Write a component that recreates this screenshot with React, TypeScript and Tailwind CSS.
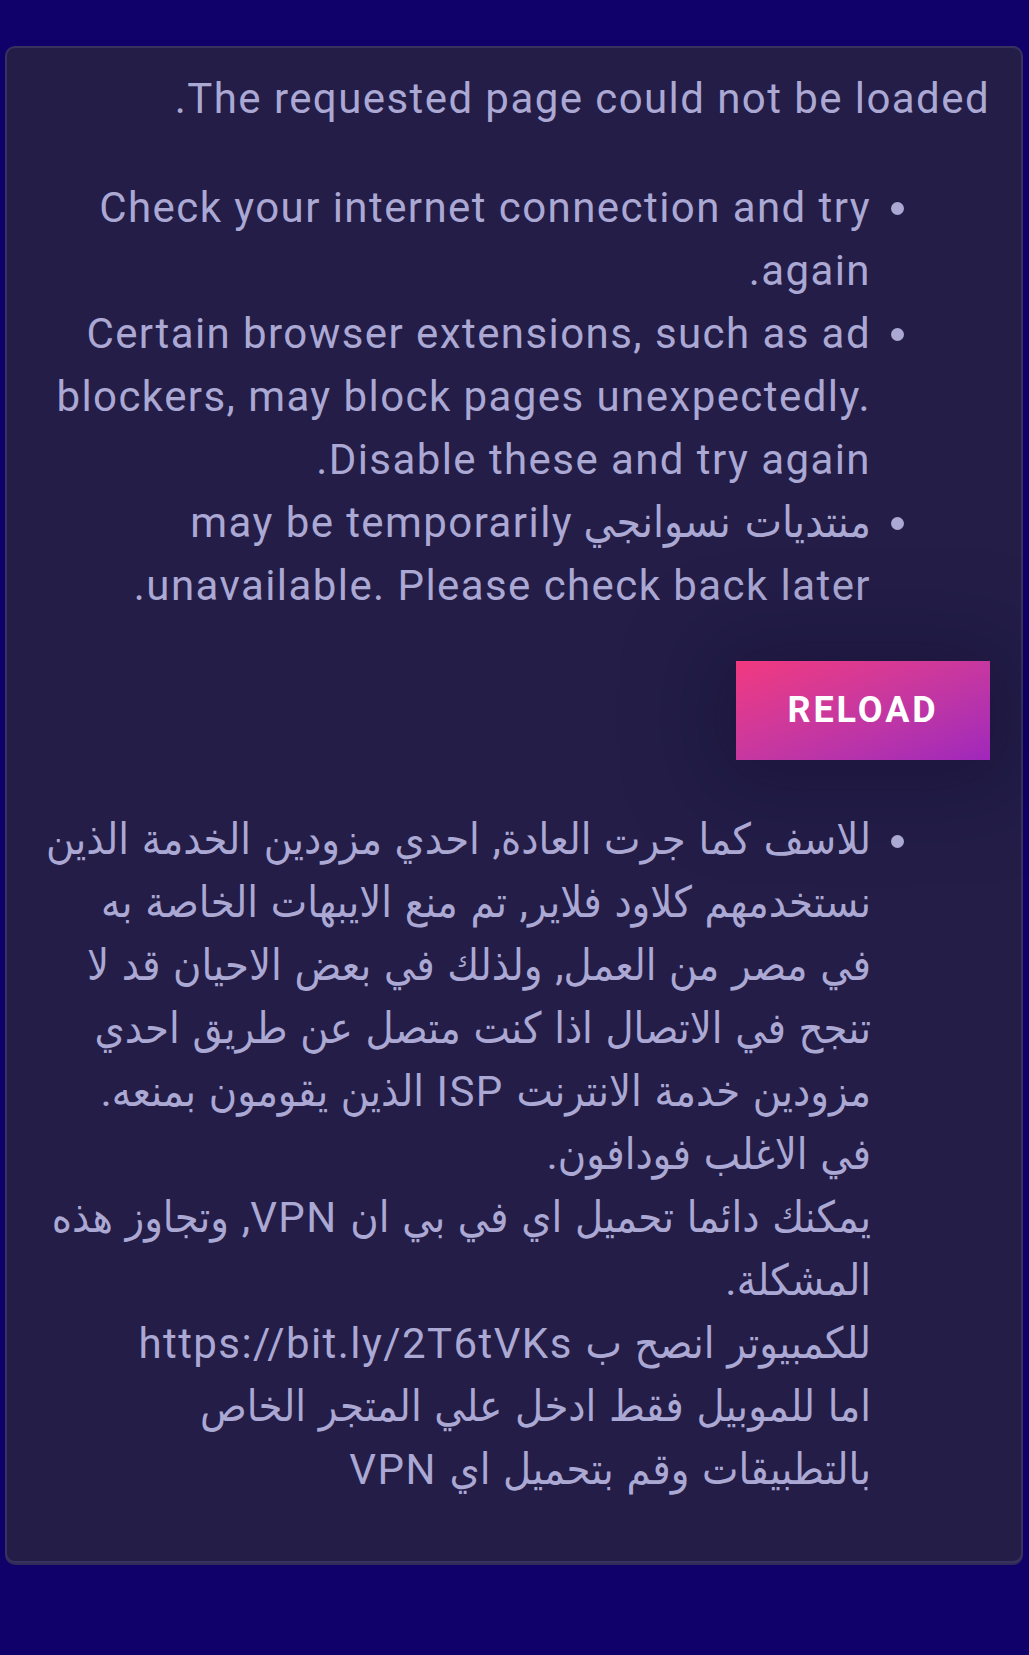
const font = "font-['Roboto','DejaVu_Sans_Condensed','DejaVu_Sans',sans-serif]";

// latin runs are a touch wider in the shot than desktop Roboto
const L = ({ children }: { children: React.ReactNode }) => (
  <span className="text-[42px] tracking-[0.034em] [word-spacing:0]">{children}</span>
);

const App = () => {
  return (
    <div className={`min-h-screen bg-[#10006a] pt-[46px] pl-[5px] pr-[6px] pb-[93px] ${font}`}>
      <section
        dir="rtl"
        className="rounded-[10px] border-2 border-[#38325f] bg-[#231d48] px-[31px] pt-[19px] pb-[60px] text-[42px] leading-[63px] text-[#aba8d4] shadow-[0_2px_0_#2f2a58]"
      >
        <p>
          <L>The requested page could not be loaded.</L>
        </p>

        <ul className="mt-[46px] list-disc ps-[119px]">
          <li>
            <L>Check your internet connection and try again.</L>
          </li>
          <li>
            <L>
              Certain browser extensions, such as ad blockers, may block pages
              unexpectedly. Disable these and try again.
            </L>
          </li>
          <li>
            <span className="text-[44px] [word-spacing:3px]">منتديات نسوانجي</span>{" "}
            <L>may be temporarily unavailable. Please check back later.</L>
          </li>
        </ul>

        <div className="mt-[44px] flex">
          <button className="-me-[2px] h-[99px] w-[254px] bg-linear-to-br from-[#f2387f] to-[#9f26bb] text-[36px] font-bold tracking-[0.08em] text-white shadow-[0_6px_90px_30px_rgba(10,6,30,0.22)]">
            RELOAD
          </button>
        </div>

        <ul className="mt-[48px] list-disc ps-[119px]">
          <li className="whitespace-nowrap text-[43px] [word-spacing:2px]">
            للاسف كما جرت العادة, احدي مزودين الخدمة الذين
            <br />
            نستخدمهم كلاود فلاير, تم منع الايبهات الخاصة به
            <br />
            في مصر من العمل, ولذلك في بعض الاحيان قد لا
            <br />
            تنجح في الاتصال اذا كنت متصل عن طريق احدي
            <br />
            مزودين خدمة الانترنت <L>ISP</L> الذين يقومون بمنعه.
            <br />
            في الاغلب فودافون.
            <br />
            يمكنك دائما تحميل اي في بي ان <L>VPN</L>, وتجاوز هذه
            <br />
            المشكلة.
            <br />
            للكمبيوتر انصح ب <L>https://bit.ly/2T6tVKs</L>
            <br />
            اما للموبيل فقط ادخل علي المتجر الخاص
            <br />
            بالتطبيقات وقم بتحميل اي <L>VPN</L>
          </li>
        </ul>
      </section>
    </div>
  );
};

export default App;
